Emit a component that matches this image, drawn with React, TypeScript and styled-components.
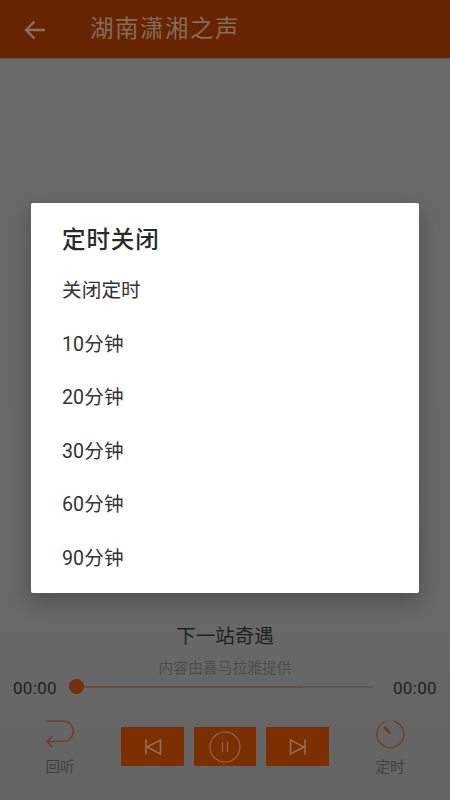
import React from "react";
import styled, { createGlobalStyle } from "styled-components";

const CJK = `Roboto, "Noto Sans CJK SC", sans-serif`;

const Global = createGlobalStyle`
  html, body { margin: 0; padding: 0; background: #686868; }
  body { font-family: ${CJK}; }
  * { box-sizing: border-box; }
`;

const Page = styled.div`
  position: relative;
  width: 450px;
  height: 800px;
  display: flex;
  flex-direction: column;
  overflow: hidden;
  background: linear-gradient(#696969 0, #686868 600px, #646464 800px);
`;

const Header = styled.header`
  height: 59px;
  flex: none;
  display: flex;
  align-items: center;
  background: #662400;
  border-bottom: 1px solid #6b574a;
  padding: 2px 0 0 23px;
  gap: 43px;
`;

const BackButton = styled.svg`
  width: 24px;
  height: 24px;
  flex: none;
`;

const HeaderTitle = styled.h1`
  margin: 0;
  font-size: 23.5px;
  font-weight: 400;
  letter-spacing: 1.5px;
  color: #856c5f;
  line-height: 1;
`;

const Spacer = styled.div`
  flex: 1;
`;

const Player = styled.section`
  flex: none;
  display: flex;
  flex-direction: column;
  height: 184px;
  padding-top: 8px;
`;

const SongTitle = styled.div`
  height: 26px;
  line-height: 26px;
  text-align: center;
  font-size: 19.5px;
  color: #1f1f1f;
`;

const Credit = styled.div`
  height: 20px;
  margin-top: 8px;
  line-height: 20px;
  text-align: center;
  font-size: 14.8px;
  color: #4e4e4e;
`;

const ProgressRow = styled.div`
  display: flex;
  align-items: center;
  height: 22px;
  margin-top: -1px;
  padding: 0 13px;
`;

const Time = styled.span`
  flex: none;
  width: 44px;
  font-size: 17px;
  color: #1f1f1f;
  letter-spacing: 0.3px;
`;

const Track = styled.div`
  position: relative;
  flex: 1;
  height: 2px;
  margin: -2px 20px 0 19px;
  background: #5a5a5a;
`;

const Buffered = styled.div`
  height: 100%;
  background: #6f4a3a;
`;

const Knob = styled.div`
  position: absolute;
  left: -7px;
  top: -7px;
  width: 15px;
  height: 15px;
  border-radius: 50%;
  background: #76300e;
`;

const Controls = styled.div`
  display: flex;
  align-items: flex-start;
  margin-top: 26px;
  padding-left: 30px;
`;

const SideAction = styled.div`
  width: 60px;
  flex: none;
  margin-top: -8px;
  display: flex;
  flex-direction: column;
  align-items: center;
  font-size: 14.5px;
  line-height: 18px;
  color: #414141;
`;

const SideIcon = styled.svg`
  width: 34px;
  height: 34px;
  margin-bottom: 8px;
`;

const Transport = styled.div`
  display: flex;
  gap: 10px;
  margin: 0 31px;
  padding-top: 2px;
`;

const TransportButton = styled.div<{ $w: number }>`
  width: ${(p) => p.$w}px;
  height: 39px;
  background: #7c2f00;
  display: flex;
  align-items: center;
  justify-content: center;
`;

const TransportIcon = styled.svg`
  display: block;
`;

const Overlay = styled.div`
  position: absolute;
  inset: 0;
  display: flex;
  justify-content: center;
  align-items: flex-start;
  padding-top: 203px;
`;

const Dialog = styled.div`
  width: 388px;
  height: 390px;
  background: #fff;
  border-radius: 2px;
  box-shadow: 0 8px 20px rgba(0, 0, 0, 0.26);
  padding: 0 31px;
`;

const DialogTitle = styled.h2`
  margin: 0;
  height: 59px;
  padding-top: 14px;
  line-height: 46px;
  font-size: 23.5px;
  font-weight: 500;
  letter-spacing: 0.9px;
  color: #2a2a2a;
`;

const Option = styled.div`
  height: 53.5px;
  display: flex;
  align-items: center;
  font-size: 19.6px;
  letter-spacing: 0.1px;
  color: #333;
`;

const options = ["关闭定时", "10分钟", "20分钟", "30分钟", "60分钟", "90分钟"];

export default function App() {
  return (
    <Page>
      <Global />
      <Header>
        <BackButton viewBox="0 0 24 24" fill="none" stroke="#8a6f62" strokeWidth="2.4">
          <path d="M22 12H3M11.5 3.5 3 12l8.5 8.5" />
        </BackButton>
        <HeaderTitle>湖南潇湘之声</HeaderTitle>
      </Header>
      <Spacer />
      <Player>
        <SongTitle>下一站奇遇</SongTitle>
        <Credit>内容由喜马拉雅提供</Credit>
        <ProgressRow>
          <Time>00:00</Time>
          <Track>
            <Buffered style={{ width: "76%" }} />
            <Knob />
          </Track>
          <Time>00:00</Time>
        </ProgressRow>
        <Controls>
          <SideAction>
            <SideIcon viewBox="0 0 34 34" fill="none" stroke="#743e20" strokeWidth="1.5">
              <path d="M4 4h16a8.5 8.5 0 0 1 0 20.5H4M9.5 19 4 24.5 9.5 30" />
            </SideIcon>
            回听
          </SideAction>
          <Transport>
            <TransportButton $w={63}>
              <TransportIcon width="18" height="18" viewBox="0 0 18 18" fill="none" stroke="#966c58" strokeWidth="1.6">
                <path d="M2 1.5v15M16.5 2v14L3 9z" />
              </TransportIcon>
            </TransportButton>
            <TransportButton $w={62}>
              <TransportIcon width="32" height="32" viewBox="0 0 32 32" fill="none" stroke="#966c58" strokeWidth="1.1">
                <circle cx="16" cy="16" r="15" />
                <path d="M13.5 11v10M18.5 11v10" />
              </TransportIcon>
            </TransportButton>
            <TransportButton $w={63}>
              <TransportIcon width="18" height="18" viewBox="0 0 18 18" fill="none" stroke="#966c58" strokeWidth="1.6">
                <path d="M16 1.5v15M1.5 2v14L15 9z" />
              </TransportIcon>
            </TransportButton>
          </Transport>
          <SideAction>
            <SideIcon viewBox="0 0 34 34" fill="none" stroke="#743e20" strokeWidth="1.3">
              <path d="M12.5 4.5A13.5 13.5 0 1 0 20.5 4" />
              <path d="M11 10 17.5 16.5" strokeWidth="2.6" />
            </SideIcon>
            定时
          </SideAction>
        </Controls>
      </Player>
      <Overlay>
        <Dialog>
          <DialogTitle>定时关闭</DialogTitle>
          {options.map((o) => (
            <Option key={o}>{o}</Option>
          ))}
        </Dialog>
      </Overlay>
    </Page>
  );
}
